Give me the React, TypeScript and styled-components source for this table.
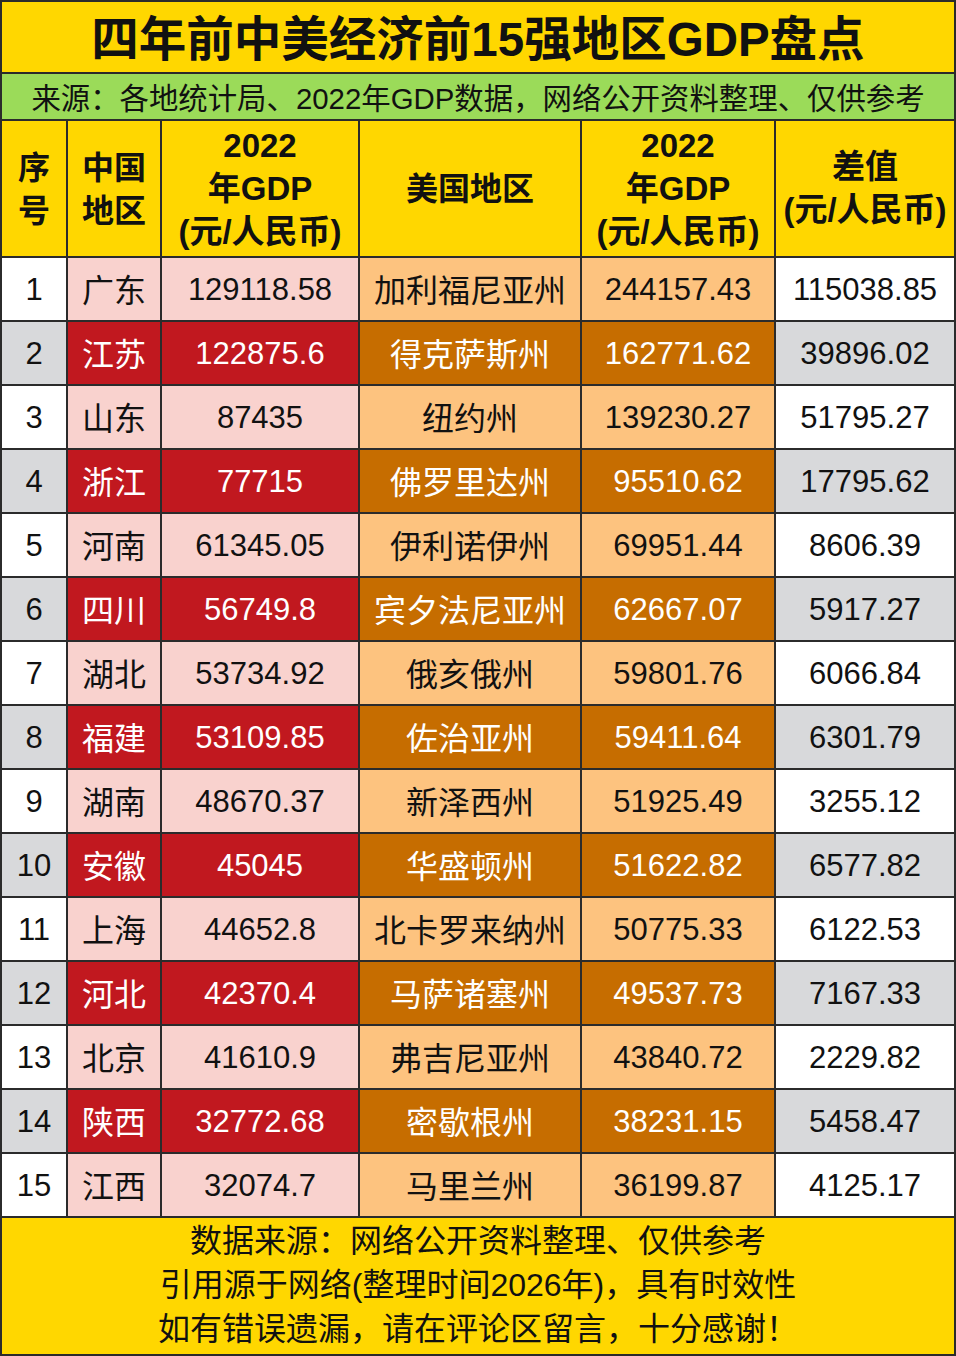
import React from "react";
import styled, { createGlobalStyle } from "styled-components";

const Global = createGlobalStyle`
  html, body { margin: 0; padding: 0; background: #2b2b2b; }
  body { font-family: "Liberation Sans", "Noto Sans CJK SC", sans-serif; }
`;

const LATIN = `"Liberation Sans", "Noto Sans CJK SC", sans-serif`;
const CJK = `"Noto Sans CJK SC", "Liberation Sans", sans-serif`;

const Sheet = styled.div`
  width: 956px;
  height: 1356px;
  box-sizing: border-box;
  padding: 2px;
  background: #2b2b2b;
  display: grid;
  grid-template-columns: 64px 92px 196px 220px 192px 178px;
  grid-template-rows: 70px 45px 135px repeat(15, 62px) 136px;
  gap: 2px;
`;

const Title = styled.div`
  grid-column: 1 / -1;
  background: #ffd700;
  display: flex;
  align-items: center;
  justify-content: center;
  font-family: ${LATIN};
  font-size: 47.5px;
  font-weight: 700;
  color: #111;
  padding-bottom: 3px;
`;

const Sub = styled.div`
  grid-column: 1 / -1;
  background: #9bdb59;
  display: flex;
  align-items: center;
  justify-content: center;
  font-family: ${LATIN};
  font-size: 29.4px;
  color: #111;
  padding-bottom: 2px;
`;

const Head = styled.div<{ $cjk?: boolean }>`
  background: #ffd700;
  display: flex;
  align-items: center;
  justify-content: center;
  text-align: center;
  font-family: ${(p) => (p.$cjk ? CJK : LATIN)};
  font-size: ${(p) => (p.$cjk ? "32px" : "33px")};
  font-weight: 700;
  line-height: 43px;
  color: #111;
  white-space: pre-line;
  padding-bottom: ${(p) => (p.$cjk ? "4px" : "1px")};
`;

type Tone = "white" | "gray" | "pink" | "red" | "peach" | "amber";

const bg: Record<Tone, string> = {
  white: "#ffffff",
  gray: "#d8d9db",
  pink: "#f9d2ce",
  red: "#c1181f",
  peach: "#fdc37f",
  amber: "#c66d00",
};

const Cell = styled.div<{ $tone: Tone; $cjk?: boolean }>`
  background: ${(p) => bg[p.$tone]};
  color: ${(p) => (p.$tone === "red" || p.$tone === "amber" ? "#ffffff" : "#111")};
  display: flex;
  align-items: center;
  justify-content: center;
  font-family: ${(p) => (p.$cjk ? CJK : LATIN)};
  font-size: ${(p) => (p.$cjk ? "32px" : "31px")};
  white-space: nowrap;
  padding-top: ${(p) => (p.$cjk ? "0" : "2px")};
  padding-bottom: ${(p) => (p.$cjk ? "3px" : "0")};
`;

const Footer = styled.div`
  grid-column: 1 / -1;
  background: #ffd700;
  display: flex;
  flex-direction: column;
  align-items: center;
  justify-content: center;
  font-family: ${LATIN};
  font-size: 32px;
  line-height: 44px;
  color: #111;
  padding-bottom: 2px;
`;

const rows: [string, string, string, string, string, string][] = [
  ["1", "广东", "129118.58", "加利福尼亚州", "244157.43", "115038.85"],
  ["2", "江苏", "122875.6", "得克萨斯州", "162771.62", "39896.02"],
  ["3", "山东", "87435", "纽约州", "139230.27", "51795.27"],
  ["4", "浙江", "77715", "佛罗里达州", "95510.62", "17795.62"],
  ["5", "河南", "61345.05", "伊利诺伊州", "69951.44", "8606.39"],
  ["6", "四川", "56749.8", "宾夕法尼亚州", "62667.07", "5917.27"],
  ["7", "湖北", "53734.92", "俄亥俄州", "59801.76", "6066.84"],
  ["8", "福建", "53109.85", "佐治亚州", "59411.64", "6301.79"],
  ["9", "湖南", "48670.37", "新泽西州", "51925.49", "3255.12"],
  ["10", "安徽", "45045", "华盛顿州", "51622.82", "6577.82"],
  ["11", "上海", "44652.8", "北卡罗来纳州", "50775.33", "6122.53"],
  ["12", "河北", "42370.4", "马萨诸塞州", "49537.73", "7167.33"],
  ["13", "北京", "41610.9", "弗吉尼亚州", "43840.72", "2229.82"],
  ["14", "陕西", "32772.68", "密歇根州", "38231.15", "5458.47"],
  ["15", "江西", "32074.7", "马里兰州", "36199.87", "4125.17"],
];

const headers: { text: string; cjk: boolean }[] = [
  { text: "序\n号", cjk: true },
  { text: "中国\n地区", cjk: true },
  { text: "2022\n年GDP\n(元/人民币)", cjk: false },
  { text: "美国地区", cjk: true },
  { text: "2022\n年GDP\n(元/人民币)", cjk: false },
  { text: "差值\n(元/人民币)", cjk: false },
];

export default function App() {
  return (
    <>
      <Global />
      <Sheet>
        <Title>四年前中美经济前15强地区GDP盘点</Title>
        <Sub>来源：各地统计局、2022年GDP数据，网络公开资料整理、仅供参考</Sub>
        {headers.map((h, i) => (
          <Head key={i} $cjk={h.cjk}>
            {h.text}
          </Head>
        ))}
        {rows.map((r, i) => {
          const even = i % 2 === 1;
          const tones: Tone[] = even
            ? ["gray", "red", "red", "amber", "amber", "gray"]
            : ["white", "pink", "pink", "peach", "peach", "white"];
          return r.map((v, j) => (
            <Cell key={`${i}-${j}`} $tone={tones[j]} $cjk={j === 1 || j === 3}>
              {v}
            </Cell>
          ));
        })}
        <Footer>
          <div>数据来源：网络公开资料整理、仅供参考</div>
          <div>引用源于网络(整理时间2026年)，具有时效性</div>
          <div>如有错误遗漏，请在评论区留言，十分感谢！</div>
        </Footer>
      </Sheet>
    </>
  );
}
